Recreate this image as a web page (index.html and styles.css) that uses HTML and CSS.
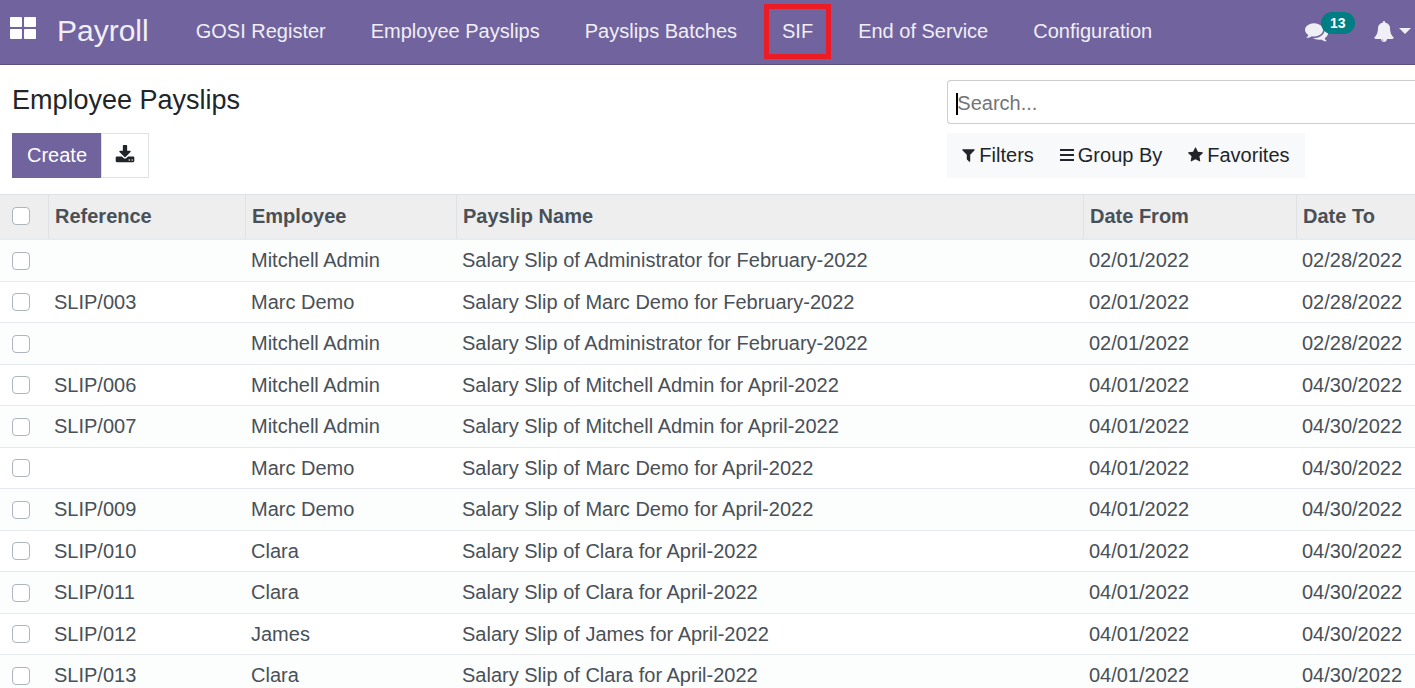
FILE: index.html
```
<!DOCTYPE html>
<html lang="en">
<head>
<meta charset="utf-8">
<title>Payroll - Employee Payslips</title>
<link rel="stylesheet" href="styles.css">
</head>
<body>
<header class="navbar">
  <button class="apps" aria-label="Applications">
    <svg width="26" height="22" viewBox="0 0 26 22" fill="currentColor"><rect width="12" height="10" rx="1"/><rect x="14" width="12" height="10" rx="1"/><rect y="12" width="12" height="10" rx="1"/><rect x="14" y="12" width="12" height="10" rx="1"/></svg>
  </button>
  <a class="brand" href="#">Payroll</a>
  <nav class="menu">
    <a href="#">GOSI Register</a>
    <a href="#">Employee Payslips</a>
    <a href="#">Payslips Batches</a>
    <a href="#" class="marked">SIF</a>
    <a href="#">End of Service</a>
    <a href="#">Configuration</a>
  </nav>
  <div class="systray">
    <button class="messages" aria-label="Conversations">
      <svg width="23" height="23" viewBox="0 0 1792 1792" fill="currentColor"><path d="M1408 768q0 139-94 257t-256.500 186.500-353.500 68.500q-86 0-176-16-124 88-278 128-36 9-86 16h-3q-11 0-20.500-8t-11.500-21q-1-3-1-6.500t.5-6.500 2-6l2.500-5 3.500-5.500 4-5 4.500-5 4-4.500q5-6 23-25t26-29.500 22.500-29 25-38.500 20.500-44q-124-72-195-177t-71-224q0-139 94-257t256.500-186.500 353.500-68.500 353.500 68.500 256.500 186.500 94 257zm384 256q0 120-71 224.500t-195 176.500q10 24 20.500 44t25 38.500 22.500 29 26 29.500 23 25q1 1 4 4.500t4.500 5 4 5 3.500 5.500l2.500 5 2 6 .5 6.500-1 6.500q-3 14-13 22t-22 7q-50-7-86-16-154-40-278-128-90 16-176 16-271 0-472-132 58 4 88 4 161 0 309-45t264-129q125-92 192-212t67-254q0-77-23-152 129 71 204 178t75 230z"/></svg>
      <span class="badge">13</span>
    </button>
    <button class="alerts" aria-label="Notifications">
      <svg width="20" height="21" viewBox="0 0 1664 1792" fill="currentColor"><path d="M848 1696q0-16-16-16-59 0-101.500-42.500t-42.500-101.500q0-16-16-16t-16 16q0 73 51.500 124.500t124.500 51.500q16 0 16-16zm816-288q0 52-38 90t-90 38h-448q0 106-75 181t-181 75-181-75-75-181h-448q-52 0-90-38t-38-90q50-42 91-88t85-119.500 74.500-158.500 50-206 19.500-260q0-152 117-282.500t307-158.500q-8-19-8-39 0-40 28-68t68-28 68 28 28 68q0 20-8 39 190 28 307 158.500t117 282.500q0 139 19.500 260t50 206 74.500 158.500 85 119.500 91 88z"/></svg>
      <svg width="12" height="6" viewBox="0 0 12 6" fill="currentColor"><path d="M0 0h12L6 6z"/></svg>
    </button>
  </div>
</header>

<section class="panel">
  <div class="panel-left">
    <h1>Employee Payslips</h1>
    <div class="actions">
      <button class="create">Create</button>
      <button class="export" aria-label="Export all">
        <svg width="20" height="20" viewBox="0 0 1664 1792" fill="currentColor"><path d="M1280 1344q0-26-19-45t-45-19-45 19-19 45 19 45 45 19 45-19 19-45zm256 0q0-26-19-45t-45-19-45 19-19 45 19 45 45 19 45-19 19-45zm128-224v320q0 40-28 68t-68 28h-1472q-40 0-68-28t-28-68v-320q0-40 28-68t68-28h465l135 136q58 56 136 56t136-56l136-136h464q40 0 68 28t28 68zm-325-569q17 41-14 70l-448 448q-18 19-45 19t-45-19l-448-448q-31-29-14-70 17-39 59-39h256v-448q0-26 19-45t45-19h256q26 0 45 19t19 45v448h256q42 0 59 39z"/></svg>
      </button>
    </div>
  </div>
  <div class="panel-right">
    <div class="search">
      <input type="text" placeholder="Search..." aria-label="Search">
      <span class="caret"></span>
    </div>
    <div class="filters">
      <button><svg width="13" height="16" viewBox="0 0 1408 1792" fill="currentColor"><path d="M1403 295q17 41-14 70l-493 493v742q0 42-39 59-13 5-25 5-27 0-45-19l-256-256q-19-19-19-45v-486l-493-493q-31-29-14-70 17-39 59-39h1280q42 0 59 39z"/></svg>Filters</button>
      <button><svg width="14" height="12" viewBox="0 0 14 12" fill="currentColor"><path d="M0 0h14v2H0zM0 5h14v2H0zM0 10h14v2H0z"/></svg>Group By</button>
      <button><svg width="15" height="16" viewBox="0 0 1664 1792" fill="currentColor"><path d="M1664 647q0 22-26 48l-363 354 86 500q1 7 1 20 0 21-10.500 35.500t-30.500 14.500q-19 0-40-12l-449-236-449 236q-22 12-40 12-21 0-31.500-14.500t-10.500-35.500q0-6 2-20l86-500-364-354q-25-27-25-48 0-37 56-46l502-73 225-455q19-41 49-41t49 41l225 455 502 73q56 9 56 46z"/></svg>Favorites</button>
    </div>
  </div>
</section>

<main class="list">
<table>
  <colgroup><col class="c-check"><col class="c-ref"><col class="c-emp"><col><col class="c-from"><col class="c-to"></colgroup>
  <thead>
    <tr><th><input type="checkbox" aria-label="Select all"></th><th>Reference</th><th>Employee</th><th>Payslip Name</th><th>Date From</th><th>Date To</th></tr>
  </thead>
  <tbody>
    <tr><td><input type="checkbox" aria-label="Select row"></td><td></td><td>Mitchell Admin</td><td>Salary Slip of Administrator for February-2022</td><td>02/01/2022</td><td>02/28/2022</td></tr>
    <tr><td><input type="checkbox" aria-label="Select row"></td><td>SLIP/003</td><td>Marc Demo</td><td>Salary Slip of Marc Demo for February-2022</td><td>02/01/2022</td><td>02/28/2022</td></tr>
    <tr><td><input type="checkbox" aria-label="Select row"></td><td></td><td>Mitchell Admin</td><td>Salary Slip of Administrator for February-2022</td><td>02/01/2022</td><td>02/28/2022</td></tr>
    <tr><td><input type="checkbox" aria-label="Select row"></td><td>SLIP/006</td><td>Mitchell Admin</td><td>Salary Slip of Mitchell Admin for April-2022</td><td>04/01/2022</td><td>04/30/2022</td></tr>
    <tr><td><input type="checkbox" aria-label="Select row"></td><td>SLIP/007</td><td>Mitchell Admin</td><td>Salary Slip of Mitchell Admin for April-2022</td><td>04/01/2022</td><td>04/30/2022</td></tr>
    <tr><td><input type="checkbox" aria-label="Select row"></td><td></td><td>Marc Demo</td><td>Salary Slip of Marc Demo for April-2022</td><td>04/01/2022</td><td>04/30/2022</td></tr>
    <tr><td><input type="checkbox" aria-label="Select row"></td><td>SLIP/009</td><td>Marc Demo</td><td>Salary Slip of Marc Demo for April-2022</td><td>04/01/2022</td><td>04/30/2022</td></tr>
    <tr><td><input type="checkbox" aria-label="Select row"></td><td>SLIP/010</td><td>Clara</td><td>Salary Slip of Clara for April-2022</td><td>04/01/2022</td><td>04/30/2022</td></tr>
    <tr><td><input type="checkbox" aria-label="Select row"></td><td>SLIP/011</td><td>Clara</td><td>Salary Slip of Clara for April-2022</td><td>04/01/2022</td><td>04/30/2022</td></tr>
    <tr><td><input type="checkbox" aria-label="Select row"></td><td>SLIP/012</td><td>James</td><td>Salary Slip of James for April-2022</td><td>04/01/2022</td><td>04/30/2022</td></tr>
    <tr><td><input type="checkbox" aria-label="Select row"></td><td>SLIP/013</td><td>Clara</td><td>Salary Slip of Clara for April-2022</td><td>04/01/2022</td><td>04/30/2022</td></tr>
  </tbody>
</table>
</main>
</body>
</html>
```
FILE: styles.css
```
* { box-sizing: border-box; }

body {
  margin: 0;
  height: 100vh;
  overflow: hidden;
  display: flex;
  flex-direction: column;
  background: #fff;
  color: #212529;
  font: 20px/30px "Liberation Sans", Arial, sans-serif;
}

button {
  border: 0;
  padding: 0;
  background: none;
  color: inherit;
  font: inherit;
  display: flex;
  align-items: center;
}

svg { display: block; flex: none; }

/* Top bar */
.navbar {
  flex: none;
  display: flex;
  align-items: center;
  height: 65px;
  padding: 0 4px 2px 10px;
  background: #71639e;
  border-bottom: 1px solid #5a4f7f;
  color: #f0eff5;
  white-space: nowrap;
}
.navbar a { color: inherit; text-decoration: none; }
.apps { color: #fff; padding-bottom: 6px; }
.brand { font-size: 30px; margin: 0 29px 0 21px; }
.menu { display: flex; align-items: center; }
.menu a { padding: 7px 13px 8px; border: 5px solid transparent; margin-right: 9px; }
.menu a.marked { border-color: #ed1c24; }
.systray { display: flex; align-items: center; margin-left: auto; gap: 46px; }
.messages { position: relative; }
.badge {
  position: absolute;
  left: 16px;
  top: -8px;
  padding: 0 9px;
  border-radius: 11px;
  background: #017e84;
  color: #fff;
  font-size: 14px;
  font-weight: bold;
  line-height: 22px;
}
.alerts { gap: 5px; }

/* Control panel */
.panel {
  flex: none;
  display: flex;
  justify-content: space-between;
  height: 129px;
  padding-left: 12px;
}
.panel-left { padding-top: 18px; }
h1 { margin: 0; font-size: 27px; font-weight: normal; line-height: 34px; }
.actions { display: flex; margin-top: 16px; }
.create { height: 45px; padding: 0 14px 2px 15px; background: #71639e; color: #fff; }
.export { height: 45px; padding: 0 13px 2px; border: 1px solid #dee2e6; }
.panel-right { width: calc(100% / 3); padding-top: 15px; }
.search { position: relative; }
.search input {
  display: block;
  width: 100%;
  height: 44px;
  padding: 2px 9px 0;
  border: 1px solid #ccc;
  border-right: 0;
  border-radius: 4px 0 0 4px;
  font: inherit;
  outline: none;
}
.search input::placeholder { color: #757575; opacity: 1; }
.caret { position: absolute; left: 9px; top: 13px; width: 2px; height: 22px; background: #000; }
.filters { display: inline-flex; margin-top: 9px; padding: 0 2px; background: #f8f9fa; white-space: nowrap; }
.filters button { height: 45px; padding: 0 13px 1px; gap: 4px; }

/* Payslip list */
.list { flex: 1; min-height: 0; overflow: hidden; }
table { width: 100%; table-layout: fixed; border-collapse: separate; border-spacing: 0; color: #495057; white-space: nowrap; }
.c-check { width: 48px; }
.c-ref { width: 197px; }
.c-emp { width: 211px; }
.c-from { width: 213px; }
.c-to { width: 119px; }
th {
  height: 46px;
  padding: 0 6px 2px;
  text-align: left;
  background: #eee;
  border-top: 1px solid #dee2e6;
  border-bottom: 2px solid #e7ebee;
  border-left: 1px solid #dee2e6;
}
th:first-child { border-left: 0; }
td { height: 41px; padding: 0 6px; border-bottom: 1px solid #e7eaed; }
tbody tr:nth-child(odd) { background: #fcfdfd; }
tbody tr:nth-child(odd) td { height: 42px; padding-bottom: 2px; }
th:first-child { padding: 0 12px 2px; }
tbody tr td:first-child, tbody tr:nth-child(odd) td:first-child { padding: 0 12px; }
input[type="checkbox"] {
  appearance: none;
  display: block;
  width: 18px;
  height: 18px;
  margin: 0;
  border: 1px solid #adb5bd;
  border-radius: 4px;
  background: #fff;
}
```
